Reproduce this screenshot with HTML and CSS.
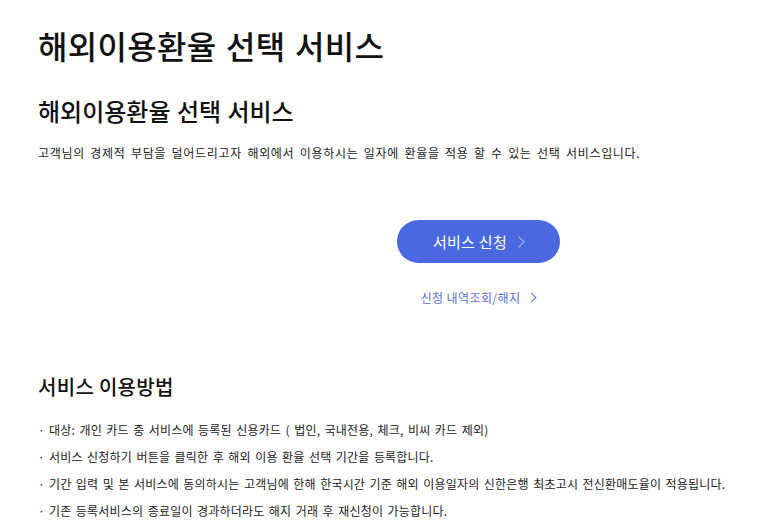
FILE: index.html
```html
<html>
<head>
	<meta charset="utf-8">
	<link rel="stylesheet" href="styles.css">
</head>
<body>
	<div class="wrap">
		<h1 class="page-title">해외이용환율 선택 서비스</h1>
		<h2 class="sec-title">해외이용환율 선택 서비스</h2>
		<p class="desc">고객님의 경제적 부담을 덜어드리고자 해외에서 이용하시는 일자에 환율을 적용 할 수 있는 선택 서비스입니다.</p>

		<div class="actions">
			<a class="btn-apply" href="#">서비스 신청<span class="chev"></span></a>
			<a class="link-more" href="#">신청 내역조회/해지<span class="chev"></span></a>
		</div>

		<h3 class="sub-title">서비스 이용방법</h3>
		<ul class="dot-list">
			<li>대상: 개인 카드 중 서비스에 등록된 신용카드 ( 법인, 국내전용, 체크, 비씨 카드 제외)</li>
			<li>서비스 신청하기 버튼을 클릭한 후 해외 이용 환율 선택 기간을 등록합니다.</li>
			<li>기간 입력 및 본 서비스에 동의하시는 고객님에 한해 한국시간 기준 해외 이용일자의 신한은행 최초고시 전신환매도율이 적용됩니다.</li>
			<li>기존 등록서비스의 종료일이 경과하더라도 해지 거래 후 재신청이 가능합니다.</li>
		</ul>
	</div>
</body>
</html>
```

FILE: styles.css
```css
html, body { margin:0; padding:0; background:#fff; }
body { font-family:"Noto Sans CJK KR", "Noto Sans", sans-serif; color:#111; }
.wrap { padding:0 0 0 38px; }

.page-title { font-size:32px; font-weight:500; margin:0; padding-top:22px; line-height:46px; letter-spacing:0.3px; word-spacing:2px; }
.sec-title { font-size:24px; font-weight:500; margin:26px 0 0; line-height:34px; word-spacing:1px; }
.desc { font-size:12px; color:#222; margin:15px 0 0; line-height:20px; letter-spacing:0.7px; word-spacing:2px; }

.actions { display:flex; flex-direction:column; align-items:center; margin-top:57px; padding-left:156px; }
.btn-apply { display:flex; align-items:center; justify-content:center; gap:8px; width:163px; height:43px; border-radius:22px; background:#4a69e0; color:#fff; font-size:15px; text-decoration:none; letter-spacing:0.3px; }
.btn-apply .chev { width:7px; height:7px; border-top:1px solid #a9b8f0; border-right:1px solid #a9b8f0; transform:rotate(45deg); }
.link-more { display:flex; align-items:center; gap:8px; margin-top:26px; font-size:12px; color:#5b6fd8; text-decoration:none; letter-spacing:0.4px; }
.link-more .chev { width:6px; height:6px; border-top:1px solid #5b6fd8; border-right:1px solid #5b6fd8; transform:rotate(45deg); }

.sub-title { font-size:20px; font-weight:500; margin:66px 0 0; line-height:30px; letter-spacing:0.3px; }
.dot-list { list-style:none; margin:14px 0 0; padding:0; }
.dot-list li { position:relative; padding-left:11px; font-size:12px; line-height:27px; color:#222; letter-spacing:0.2px; word-spacing:1.5px; }
.dot-list li:before { content:"·"; position:absolute; left:0; top:0; }
```
